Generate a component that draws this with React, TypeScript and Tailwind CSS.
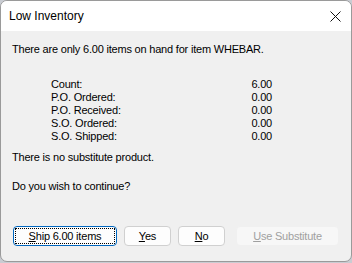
const rows = [
  { label: "Count:", value: "6.00" },
  { label: "P.O. Ordered:", value: "0.00" },
  { label: "P.O. Received:", value: "0.00" },
  { label: "S.O. Ordered:", value: "0.00" },
  { label: "S.O. Shipped:", value: "0.00" },
];

export default function App() {
  return (
    <div className="h-[263px] w-[352px] bg-[#c9ccd2] font-['Liberation_Sans',Arial,sans-serif] text-black">
      <div className="flex h-[262px] w-[352px] flex-col overflow-hidden rounded-[7px] border border-[#9a9a9a] bg-[#f0f0f0]">
        {/* TITLE BAR */}
        <div className="flex h-[30px] items-center justify-between bg-white pl-[8px] pr-[10px]">
          <span className="text-[12px]">Low Inventory</span>
          <svg width="11" height="11" viewBox="0 0 11 11">
            <path d="M0.5 0.5 L10.5 10.5 M10.5 0.5 L0.5 10.5" stroke="#111" strokeWidth="1" />
          </svg>
        </div>

        {/* BODY */}
        <div className="flex flex-1 flex-col pl-[11px] pt-[12px] text-[11px] leading-[13px] tracking-[-0.2px]">
          <p>There are only 6.00 items on hand for item WHEBAR.</p>

          <div className="mt-[22px] ml-[39px] w-[221px]">
            {rows.map((row) => (
              <div key={row.label} className="flex justify-between">
                <span>{row.label}</span>
                <span>{row.value}</span>
              </div>
            ))}
          </div>

          <p className="mt-[8px]">There is no substitute product.</p>
          <p className="mt-[16px]">Do you wish to continue?</p>

          {/* BUTTONS */}
          <div className="mt-[33px] ml-[1px] flex h-[20px] items-stretch">
            <button className="w-[104px] rounded-[4px] border border-[#0067c0] bg-[#fdfdfd] p-[1px]">
              <span className="flex h-full items-center justify-center border border-dotted border-black">
                <span className="underline underline-offset-1">S</span>hip 6.00 items
              </span>
            </button>
            <button className="ml-[7px] w-[47px] rounded-[4px] border border-[#d0d0d0] bg-[#fdfdfd]">
              <span className="underline underline-offset-1">Y</span>es
            </button>
            <button className="ml-[7px] w-[47px] rounded-[4px] border border-[#d0d0d0] bg-[#fdfdfd]">
              <span className="underline underline-offset-1">N</span>o
            </button>
            <button className="ml-[11px] w-[103px] rounded-[4px] border border-[#f0f0f0] bg-[#f7f7f7] text-[#a0a0a0]">
              <span className="underline underline-offset-1">U</span>se Substitute
            </button>
          </div>
        </div>
      </div>
    </div>
  );
}
